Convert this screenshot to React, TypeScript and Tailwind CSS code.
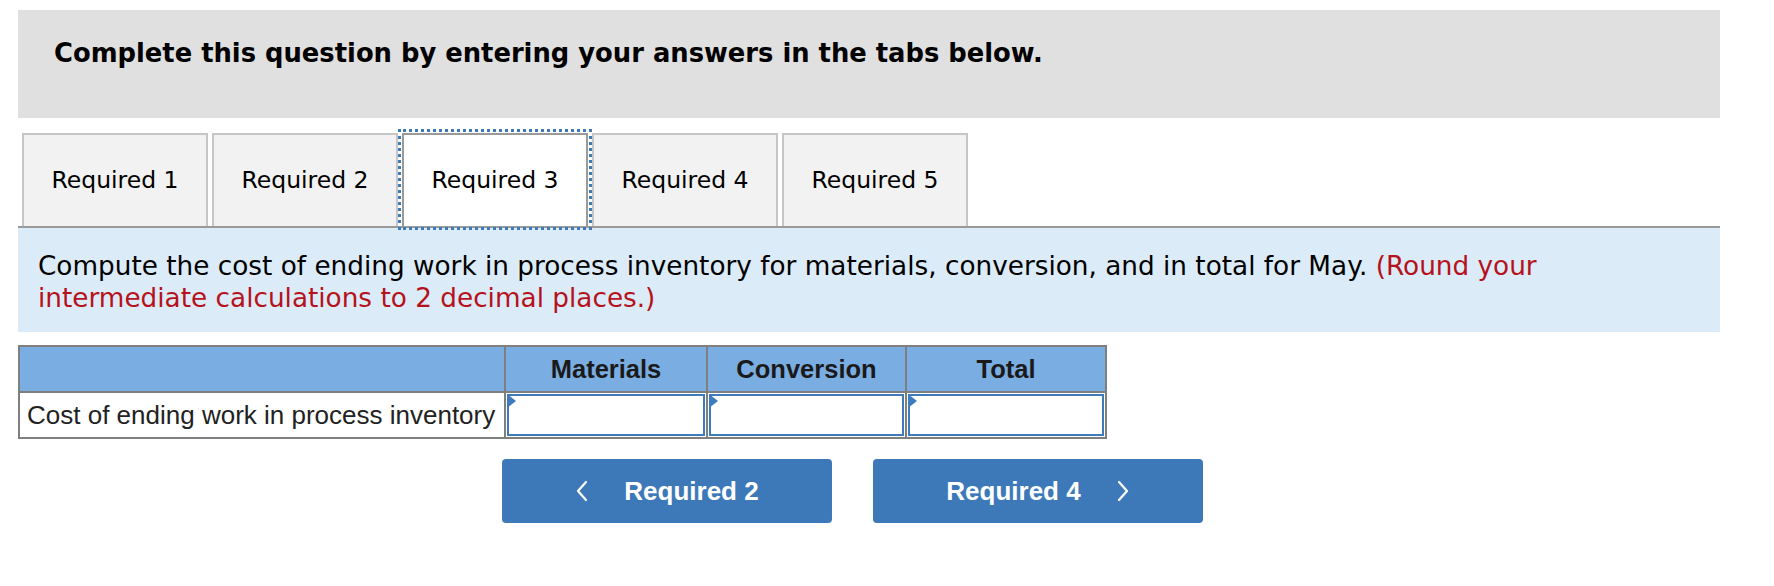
import React from "react";

const tabs = ["Required 1", "Required 2", "Required 3", "Required 4", "Required 5"];

function Chevron({ dir }: { dir: "left" | "right" }) {
  return (
    <svg width="14" height="22" viewBox="0 0 14 22" className="shrink-0">
      {dir === "left" ? (
        <path d="M11 2 L3 11 L11 20" fill="none" stroke="white" strokeWidth="2.2" strokeLinecap="round" strokeLinejoin="round" />
      ) : (
        <path d="M3 2 L11 11 L3 20" fill="none" stroke="white" strokeWidth="2.2" strokeLinecap="round" strokeLinejoin="round" />
      )}
    </svg>
  );
}

function InputCell() {
  return (
    <td className="border-2 border-[#7f7f7f] p-[1px] h-[46px]">
      <div className="relative h-full w-full border-2 border-[#3e7bbd] bg-white">
        <div className="absolute left-[-2px] top-[-2px] w-0 h-0 border-t-[7px] border-b-[7px] border-l-[9px] border-t-transparent border-b-transparent border-l-[#3e7bbd]" />
      </div>
    </td>
  );
}

export default function App() {
  return (
    <div className="w-[1774px] h-[586px] bg-white pt-[10px] pl-[18px] font-['DejaVu_Sans',sans-serif]">
      <div className="w-[1702px]">
        <div className="h-[108px] bg-[#e0e0e0] pl-[36px] pt-[28px]">
          <p className="text-[25.8px] leading-[30px] font-bold text-black">
            Complete this question by entering your answers in the tabs below.
          </p>
        </div>

        <div className="mt-[15px] flex items-end gap-[4px] pl-[4px] border-b-2 border-[#9a9a9a] h-[95px]">
          {tabs.map((t, i) =>
            i === 2 ? (
              <div
                key={t}
                className="relative z-10 w-[186px] h-[93px] flex items-center justify-center bg-white border-2 border-b-0 border-[#9a9a9a] outline-[3px] outline-dotted outline-[#3d7ab8] outline-offset-1 text-[23.5px] text-black"
              >
                {t}
              </div>
            ) : (
              <div
                key={t}
                className="w-[186px] h-[93px] flex items-center justify-center bg-[#f2f2f2] border-2 border-b-0 border-[#c6c6c6] text-[23.5px] text-black"
              >
                {t}
              </div>
            )
          )}
        </div>

        <div className="h-[104px] bg-[#dcebf8] pl-[20px] pt-[22px] text-[26.3px] leading-[32px] whitespace-nowrap">
          <p className="text-black">
            Compute the cost of ending work in process inventory for materials, conversion, and in total for May.{" "}
            <span className="text-[#b5121b]">(Round your</span>
          </p>
          <p className="text-[#b5121b]">intermediate calculations to 2 decimal places.)</p>
        </div>

        <table className="mt-[13px] border-collapse font-['Liberation_Sans',Arial,sans-serif]">
          <thead>
            <tr className="bg-[#7aade2] h-[46px]">
              <th className="border-2 border-[#7f7f7f] w-[486px]"></th>
              <th className="border-2 border-[#7f7f7f] w-[202px] text-[25.5px] font-bold text-[#1a1a1a] text-center">Materials</th>
              <th className="border-2 border-[#7f7f7f] w-[199px] text-[25.5px] font-bold text-[#1a1a1a] text-center">Conversion</th>
              <th className="border-2 border-[#7f7f7f] w-[200px] text-[25.5px] font-bold text-[#1a1a1a] text-center">Total</th>
            </tr>
          </thead>
          <tbody>
            <tr className="h-[46px]">
              <td className="border-2 border-[#7f7f7f] pl-[7px] text-[26px] text-[#222] whitespace-nowrap">
                Cost of ending work in process inventory
              </td>
              <InputCell />
              <InputCell />
              <InputCell />
            </tr>
          </tbody>
        </table>

        <div className="mt-[20px] pl-[484px] flex gap-[41px] font-['Liberation_Sans',Arial,sans-serif]">
          <button className="w-[330px] h-[64px] rounded-[4px] bg-[#3d79b9] flex items-center justify-center gap-[35px] text-white text-[26px] font-bold">
            <Chevron dir="left" />
            <span>Required 2</span>
          </button>
          <button className="w-[330px] h-[64px] rounded-[4px] bg-[#3d79b9] flex items-center justify-center gap-[35px] text-white text-[26px] font-bold">
            <span>Required 4</span>
            <Chevron dir="right" />
          </button>
        </div>
      </div>
    </div>
  );
}
